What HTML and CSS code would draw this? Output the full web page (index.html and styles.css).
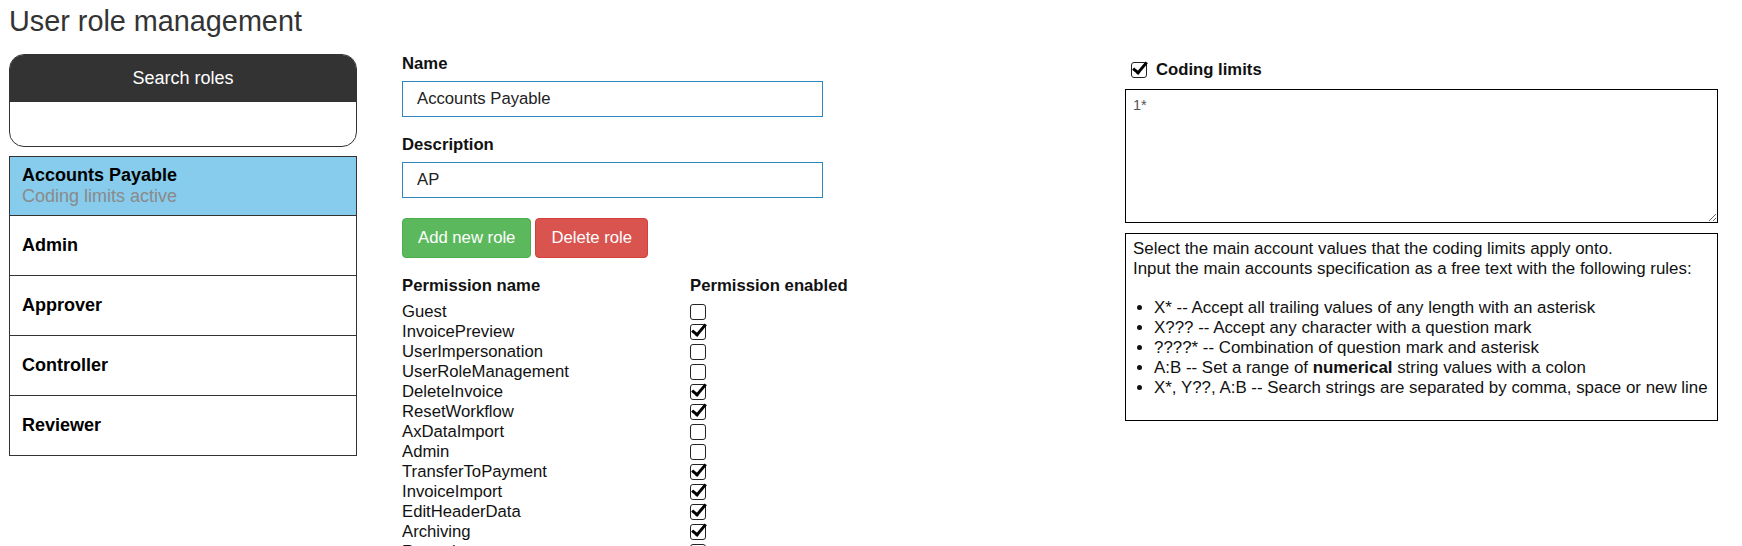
FILE: index.html
```html
<!DOCTYPE html>
<html>
<head>
    <meta charset="utf-8">
    <title>User role management</title>
    <link rel="stylesheet" href="styles.css">
</head>
<body>
    <h1>User role management</h1>

    <div class="layout">
        <div class="roles-column">
            <div class="search-box">
                <div class="search-header">Search roles</div>
                <div class="search-body"></div>
            </div>

            <ul class="role-list">
                <li class="role selected">
                    <span class="role-name">Accounts Payable</span>
                    <span class="role-note">Coding limits active</span>
                </li>
                <li class="role"><span class="role-name">Admin</span></li>
                <li class="role"><span class="role-name">Approver</span></li>
                <li class="role"><span class="role-name">Controller</span></li>
                <li class="role"><span class="role-name">Reviewer</span></li>
            </ul>
        </div>

        <div class="edit-column">
            <label class="field-label">Name</label>
            <input class="field" type="text" value="Accounts Payable">

            <label class="field-label">Description</label>
            <input class="field" type="text" value="AP">

            <div class="buttons">
                <button class="btn btn-add">Add new role</button>
                <button class="btn btn-delete">Delete role</button>
            </div>

            <div class="perm-table">
                <div class="perm-row perm-head">
                    <span>Permission name</span>
                    <span>Permission enabled</span>
                </div>
                <div class="perm-row"><span>Guest</span><span class="check"></span></div>
                <div class="perm-row"><span>InvoicePreview</span><span class="check on"></span></div>
                <div class="perm-row"><span>UserImpersonation</span><span class="check"></span></div>
                <div class="perm-row"><span>UserRoleManagement</span><span class="check"></span></div>
                <div class="perm-row"><span>DeleteInvoice</span><span class="check on"></span></div>
                <div class="perm-row"><span>ResetWorkflow</span><span class="check on"></span></div>
                <div class="perm-row"><span>AxDataImport</span><span class="check"></span></div>
                <div class="perm-row"><span>Admin</span><span class="check"></span></div>
                <div class="perm-row"><span>TransferToPayment</span><span class="check on"></span></div>
                <div class="perm-row"><span>InvoiceImport</span><span class="check on"></span></div>
                <div class="perm-row"><span>EditHeaderData</span><span class="check on"></span></div>
                <div class="perm-row"><span>Archiving</span><span class="check on"></span></div>
                <div class="perm-row"><span>Reporting</span><span class="check"></span></div>
            </div>
        </div>

        <div class="limits-column">
            <div class="limits-title">
                <span class="check on"></span>
                <span>Coding limits</span>
            </div>
            <textarea class="limits-input">1*</textarea>

            <div class="limits-help">
                Select the main account values that the coding limits apply onto.<br>
                Input the main accounts specification as a free text with the following rules:
                <ul>
                    <li>X* -- Accept all trailing values of any length with an asterisk</li>
                    <li>X??? -- Accept any character with a question mark</li>
                    <li>????* -- Combination of question mark and asterisk</li>
                    <li>A:B -- Set a range of <b>numerical</b> string values with a colon</li>
                    <li>X*, Y??, A:B -- Search strings are separated by comma, space or new line</li>
                </ul>
            </div>
        </div>
    </div>
</body>
</html>
```

FILE: styles.css
```css
body {
    font-family: "Liberation Sans", Arial, sans-serif;
    font-size: 16.7px;
    color: #111;
    margin: 0;
    padding: 0 9px;
    overflow: hidden;
}

h1 {
    font-size: 28.8px;
    font-weight: normal;
    color: #333;
    margin: 5px 0 16px;
    line-height: normal;
}

.layout {
    display: grid;
    grid-template-columns: 348px 768px 593px;
}

/* left column */
.search-box {
    border: 1px solid #333;
    border-radius: 15px;
    overflow: hidden;
    height: 93px;
    box-sizing: border-box;
}

.search-header {
    background-color: #333;
    color: #fff;
    font-size: 18px;
    height: 47px;
    display: flex;
    align-items: center;
    justify-content: center;
}

.role-list {
    list-style: none;
    margin: 9px 0 0;
    padding: 0;
    border: 1px solid #333;
}

.role {
    height: 59px;
    border-top: 1px solid #333;
    display: flex;
    flex-direction: column;
    justify-content: center;
    padding: 0 12px;
    font-size: 18px;
    line-height: 21px;
}

.role:first-child {
    border-top: none;
    height: 58px;
}

.role.selected {
    background-color: #87ccec;
}

.role-name {
    font-weight: bold;
    color: #000;
}

.role-note {
    color: #8a8a8a;
}

/* middle column */
.edit-column {
    padding-left: 45px;
    display: flex;
    flex-direction: column;
    align-items: flex-start;
}

.field-label {
    font-weight: bold;
    line-height: 20px;
    margin-bottom: 7px;
}

.field {
    width: 421px;
    height: 36px;
    box-sizing: border-box;
    border: 1px solid #2f86c0;
    padding: 0 14px;
    font-family: inherit;
    font-size: 16.7px;
    color: #222;
    margin: 0 0 18px;
    outline: none;
}

.buttons {
    display: flex;
    gap: 4px;
    margin-top: 2px;
}

.btn {
    height: 40px;
    padding: 0 15px;
    border-radius: 4px;
    font-family: inherit;
    font-size: 16.7px;
    color: #fff;
    cursor: pointer;
}

.btn-add {
    background-color: #5cb85c;
    border: 1px solid #4cae4c;
}

.btn-delete {
    background-color: #d9534f;
    border: 1px solid #d43f3a;
}

.perm-table {
    margin-top: 18px;
}

.perm-row {
    display: grid;
    grid-template-columns: 288px 1fr;
    align-items: center;
    height: 20px;
    line-height: 20px;
}

.perm-head {
    font-weight: bold;
    margin-bottom: 6px;
}

.check {
    display: inline-block;
    position: relative;
    width: 16px;
    height: 16px;
    box-sizing: border-box;
    border: 1.5px solid #222;
    border-radius: 3px;
}

.check.on::after {
    content: "";
    position: absolute;
    left: 4px;
    top: -4px;
    width: 5px;
    height: 12px;
    border: solid #000;
    border-width: 0 3px 3px 0;
    transform: rotate(40deg);
}

/* right column */
.limits-column {
    display: flex;
    flex-direction: column;
}

.limits-title {
    display: flex;
    align-items: center;
    gap: 9px;
    height: 20px;
    margin-top: 6px;
    padding-left: 6px;
    font-weight: bold;
}

.limits-input {
    margin-top: 9px;
    height: 134px;
    box-sizing: border-box;
    border: 1px solid #000;
    padding: 7px 7px;
    font-family: "Liberation Sans", Arial, sans-serif;
    font-size: 14.5px;
    color: #555;
    resize: both;
    outline: none;
}

.limits-help {
    margin-top: 10px;
    height: 188px;
    box-sizing: border-box;
    border: 1px solid #000;
    padding: 5px 7px;
    font-size: 16.9px;
    line-height: 20px;
}

.limits-help ul {
    margin: 19px 0 0;
    padding-left: 21px;
}
```
